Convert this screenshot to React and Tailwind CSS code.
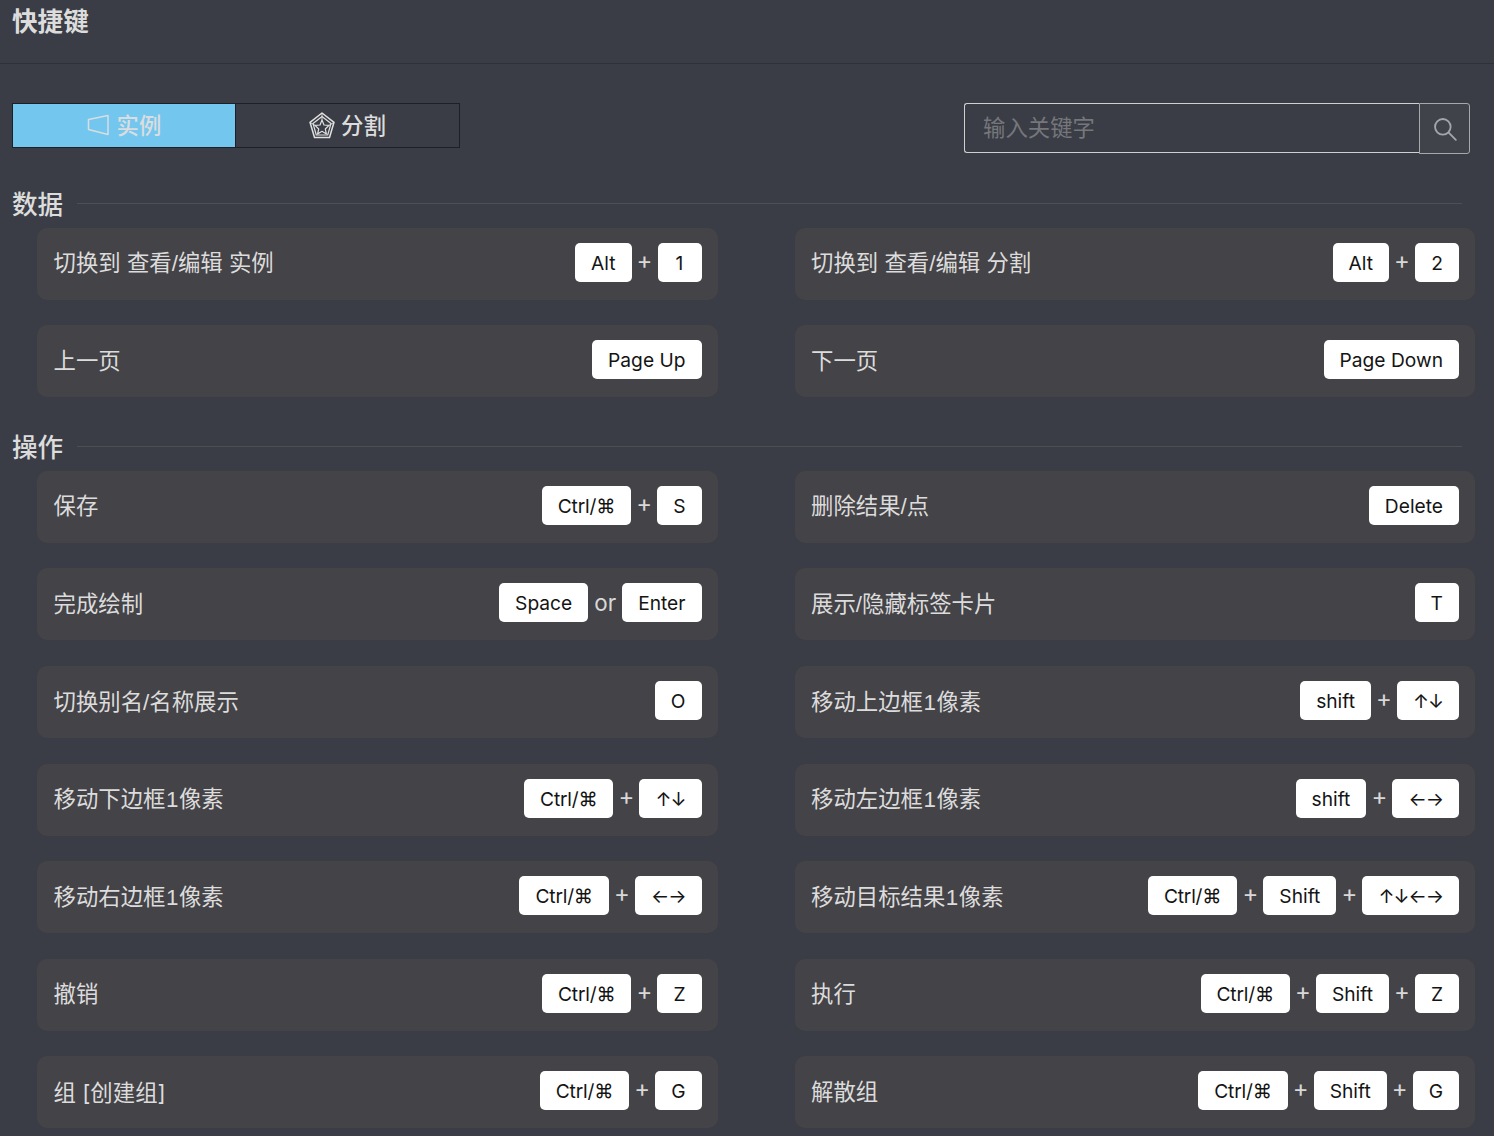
const FONT = '"Inter","Noto Sans CJK SC",sans-serif';

const sections = [
  {
    title: "数据",
    rows: [
      ["切换到 查看/编辑 实例", ["Alt", "+", "1"]],
      ["切换到 查看/编辑 分割", ["Alt", "+", "2"]],
      ["上一页", ["Page Up"]],
      ["下一页", ["Page Down"]],
    ],
  },
  {
    title: "操作",
    rows: [
      ["保存", ["Ctrl/⌘", "+", "S"]],
      ["删除结果/点", ["Delete"]],
      ["完成绘制", ["Space", "or", "Enter"]],
      ["展示/隐藏标签卡片", ["T"]],
      ["切换别名/名称展示", ["O"]],
      ["移动上边框1像素", ["shift", "+", "↑↓"]],
      ["移动下边框1像素", ["Ctrl/⌘", "+", "↑↓"]],
      ["移动左边框1像素", ["shift", "+", "←→"]],
      ["移动右边框1像素", ["Ctrl/⌘", "+", "←→"]],
      ["移动目标结果1像素", ["Ctrl/⌘", "+", "Shift", "+", "↑↓←→"]],
      ["撤销", ["Ctrl/⌘", "+", "Z"]],
      ["执行", ["Ctrl/⌘", "+", "Shift", "+", "Z"]],
      ["组 [创建组]", ["Ctrl/⌘", "+", "G"]],
      ["解散组", ["Ctrl/⌘", "+", "Shift", "+", "G"]],
    ],
  },
];

const isArrows = (k) => /[↑↓←→]/.test(k);

function Keys({ items }) {
  return (
    <div className="flex items-center mb-[3px]">
      {items.map((k, i) =>
        k === "+" ? (
          <span key={i} className="w-[26px] flex justify-center text-[24px] leading-[35px] pb-[4px] text-[#d8d8d8]">
            +
          </span>
        ) : k === "or" ? (
          <span key={i} className="px-[6px] text-[22.4px] leading-[39px] text-[#d8d8d8]">
            or
          </span>
        ) : (
          <span
            key={i}
            className={
              "h-[39px] min-w-[44px] px-[16px] pt-[2px] flex items-center justify-center rounded-[5px] bg-white text-[19.2px] text-[#141414] whitespace-nowrap " +
              (isArrows(k) ? "tracking-[-1px]" : k === "Ctrl/⌘" ? "tracking-[-0.2px]" : "")
            }
          >
            {k}
          </span>
        )
      )}
    </div>
  );
}

function Label({ text }) {
  const parts = text.split("1");
  const font = text.includes("[")
    ? "font-['Inter','Noto_Sans_CJK_SC',sans-serif]"
    : "font-['Liberation_Sans','Noto_Sans_CJK_SC',sans-serif]";
  return (
    <span className={"pt-[1px] text-[22.4px] text-[#dcdcdc] whitespace-nowrap " + font}>
      {parts.length === 2 ? (
        <>
          {parts[0]}
          <span className="inline-block w-[13.5px] text-center">1</span>
          {parts[1]}
        </>
      ) : (
        text
      )}
    </span>
  );
}

function Row({ label, keys }) {
  return (
    <div className="h-[72px] rounded-[10px] bg-[#444347] pl-[16.5px] pr-[16px] flex items-center justify-between">
      <Label text={label} />
      <Keys items={keys} />
    </div>
  );
}

function InstanceIcon() {
  return (
    <svg width="22" height="24" viewBox="0 0 22 24" fill="none" stroke="#d9dde0" strokeWidth="1.5" strokeLinejoin="round">
      <path d="M1.5 5.5 21 1.5v19L1.5 15.5z" />
    </svg>
  );
}

function PartitionIcon() {
  return (
    <svg width="26" height="28" viewBox="0 0 26 28" fill="none" stroke="#e0e0e0" strokeWidth="1.2" strokeLinejoin="round">
      <path d="M13 1 25 10.3 20.5 25.5H5.5L1 10.3z" strokeWidth="1.5" />
      <path d="M13 4.5 22 11.4 18.7 23H7.3L4 11.4z" />
      <path d="M13 8 15 13 20 13.4 16.3 17 17.4 22 13 19.3 8.6 22 9.7 17 6 13.4 11 13z" />
      <path d="M13 1v7M1 10.3l5 3.1M25 10.3l-5 3.1" strokeWidth="0.9" />
    </svg>
  );
}

function SearchIcon() {
  return (
    <svg width="26" height="26" viewBox="0 0 24 24" fill="none" stroke="#a4a6aa" strokeWidth="1.7" strokeLinecap="round">
      <circle cx="10" cy="10" r="7.2" />
      <path d="m15.4 15.4 6.6 6.6" />
    </svg>
  );
}

export default function App() {
  return (
    <div className="h-[1136px] overflow-hidden bg-[#3a3d45]" style={{ fontFamily: FONT }}>
      <header className="h-[64px] border-b border-[#2f3137] pl-[12px] pt-[4px]">
        <h1 className="text-[25.6px] leading-[36px] font-bold text-[#dcdcdc]">快捷键</h1>
      </header>

      <div className="mt-[39px] pl-[12px] pr-[24px] flex justify-between items-start">
        <div className="flex w-[448px] h-[45px]">
          <button className="w-[224px] flex items-center justify-center gap-[8px] pt-[1px] bg-[#73c6ee] border border-[#1e2026] text-[22.4px] font-medium text-[#d9dde0]">
            <InstanceIcon />
            <span>实例</span>
          </button>
          <button className="w-[225px] -ml-px flex items-center justify-center gap-[6px] pt-[1px] border border-[#1e2026] text-[22.4px] font-medium text-[#dcdcdc]">
            <PartitionIcon />
            <span>分割</span>
          </button>
        </div>
        <div className="flex w-[506px] h-[50px]">
          <div className="flex-1 h-[50px] rounded-l-[3px] border border-r-0 border-[#d0d0d0] pl-[18px] flex items-center text-[22.4px] text-[#75777c]">
            输入关键字
          </div>
          <button className="w-[51px] h-[51px] flex items-center justify-center rounded-r-[3px] border border-[#a8a8aa] bg-[#40434a]">
            <SearchIcon />
          </button>
        </div>
      </div>

      {sections.map((s, idx) => (
        <section key={s.title} className={idx === 0 ? "mt-[32.8px]" : "mt-[31.4px]"}>
          <div className="flex items-center h-[36px] mb-[6px] pl-[12px] pr-[32px]">
            <h2 className="mt-[3px] text-[25.6px] leading-[36px] font-medium text-[#dcdcdc]">{s.title}</h2>
            <div className="ml-[14px] mb-[1px] flex-1 h-px bg-[#4d5052]" />
          </div>
          <div className="ml-[37px] mr-[19px] grid grid-cols-2 gap-x-[77px] gap-y-[25.6px]">
            {s.rows.map(([label, keys]) => (
              <Row key={label} label={label} keys={keys} />
            ))}
          </div>
        </section>
      ))}
    </div>
  );
}
